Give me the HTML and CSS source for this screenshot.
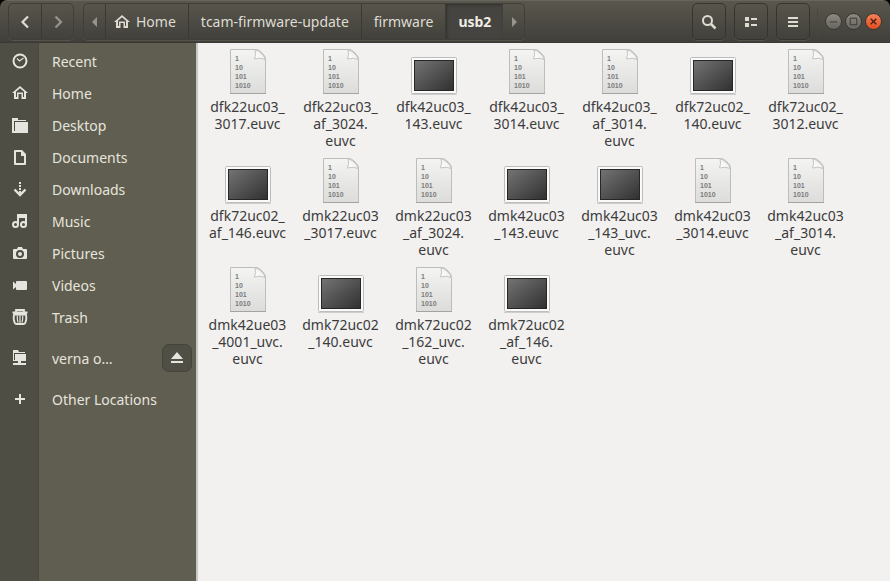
FILE: index.html
```html
<!DOCTYPE html>
<html lang="en">
<head>
<meta charset="utf-8">
<title>usb2</title>
<link rel="stylesheet" href="styles.css">
</head>
<body>
<svg class="defs" aria-hidden="true">
  <defs>
    <linearGradient id="paper" x1="0" y1="0" x2="0" y2="1"><stop offset="0" stop-color="#f4f4f3"/><stop offset="1" stop-color="#dcdcdb"/></linearGradient>
    <linearGradient id="fold" x1="0" y1="1" x2="1" y2="0"><stop offset="0" stop-color="#ffffff"/><stop offset=".5" stop-color="#f6f6f6"/><stop offset="1" stop-color="#c4c4c3"/></linearGradient>
    <linearGradient id="screen" x1="0" y1="0" x2="1" y2="1"><stop offset="0" stop-color="#747474"/><stop offset="1" stop-color="#303030"/></linearGradient>
    <symbol id="home" viewBox="0 0 16 16"><path d="M8 1 0 8h2v6h4.500v-5h3v5H14V8h2zM8 3.300 12 6.800V12h-1V7.500H5V12H4V6.800z" fill="currentColor" fill-rule="evenodd"/></symbol>
    <symbol id="recent" viewBox="0 0 16 16"><circle cx="8" cy="8" r="6.500" fill="none" stroke="currentColor" stroke-width="2"/><path d="m5 5.500 2.500 2.500 4-3" fill="none" stroke="currentColor" stroke-width="1.200"/></symbol>
    <symbol id="desktop" viewBox="0 0 16 16"><path d="M0 1h6v2h8v1H2v10h1V5h13v11H0z" fill="currentColor"/></symbol>
    <symbol id="document" viewBox="0 0 16 16"><path d="M2 2q0-1 1-1h7l4 4v10q0 1-1 1H3q-1 0-1-1zm2 1v11h8V7H9V3z" fill="currentColor" fill-rule="evenodd"/></symbol>
    <symbol id="download" viewBox="0 0 16 16"><path d="M7 1h2v2H7zm0 3h2v2H7zm0 3h2v2H7zm0 3h2v2H7z" fill="currentColor"/><path d="m2.500 8.500 5.500 5.500 5.500-5.500" fill="none" stroke="currentColor" stroke-width="2.400"/></symbol>
    <symbol id="music" viewBox="0 0 16 16"><path d="M6 12V2h8v9M6 4h8" fill="none" stroke="currentColor" stroke-width="2"/><circle cx="3.500" cy="11.500" r="2.500" fill="none" stroke="currentColor" stroke-width="2"/><circle cx="11.500" cy="11.500" r="2.500" fill="none" stroke="currentColor" stroke-width="2"/></symbol>
    <symbol id="camera" viewBox="0 0 16 16"><path d="M2 4h3l1-2h4l1 2h3q1 0 1 1v8q0 1-1 1H2q-1 0-1-1V5q0-1 1-1zm6 1a4 4 0 1 0 0 8 4 4 0 0 0 0-8zm0 2a2 2 0 1 1 0 4 2 2 0 0 1 0-4z" fill="currentColor" fill-rule="evenodd"/></symbol>
    <symbol id="video" viewBox="0 0 16 16"><path d="M1 4.500 4 7V5q0-1 1-1h9q1 0 1 1v7q0 1-1 1H5q-1 0-1-1v-2l-3 2.500z" fill="currentColor"/></symbol>
    <symbol id="trash" viewBox="0 0 16 16"><path d="M4 2.500V1h8v1.500M.5 3.500h15M2 5.500q-1 5 .8 8.500.5 1 1.700 1h7q1.200 0 1.700-1 1.800-3.500.8-8.500z" fill="none" stroke="currentColor" stroke-width="1.800"/><path d="M5.300 6.500q-.3 4 .7 7M8 6v8M10.700 6.500q.3 4-.7 7" fill="none" stroke="currentColor" stroke-width="1.200"/></symbol>
    <symbol id="remote" viewBox="0 0 16 16"><path d="M1 0h5l1 2h6v1H2v7h1V4h11v7H9v2h5v2H1v-2h5v-2H1z" fill="currentColor"/></symbol>
    <symbol id="plus" viewBox="0 0 16 16"><path d="M8 3v10M3 8h10" stroke="currentColor" stroke-width="2"/></symbol>
    <symbol id="eject" viewBox="0 0 16 16"><path d="m8 2 6 7H2zM2 11h12v2H2z" fill="currentColor"/></symbol>
    <symbol id="search" viewBox="0 0 16 16"><circle cx="6.500" cy="6.500" r="4.500" fill="none" stroke="currentColor" stroke-width="2"/><path d="m10 10 4.500 4.500" stroke="currentColor" stroke-width="2.500"/></symbol>
    <symbol id="list" viewBox="0 0 16 16"><path d="M2 3h4v4H2zm0 6h4v4H2zm6-5h6v2H8zm0 6h6v2H8z" fill="currentColor"/></symbol>
    <symbol id="menu" viewBox="0 0 16 16"><path d="M3 3h10v2H3zm0 4h10v2H3zm0 4h10v2H3z" fill="currentColor"/></symbol>
    <symbol id="back" viewBox="0 0 16 16"><path d="m11 2.500-5.500 5.500 5.500 5.500" fill="none" stroke="currentColor" stroke-width="2.200"/></symbol>
    <symbol id="forward" viewBox="0 0 16 16"><path d="m5.500 2.500 5.500 5.500-5.500 5.500" fill="none" stroke="currentColor" stroke-width="2.200"/></symbol>
    <symbol id="tri-left" viewBox="0 0 16 16"><path d="M10 3v10L5 8z" fill="currentColor"/></symbol>
    <symbol id="tri-right" viewBox="0 0 16 16"><path d="M6 3v10l5-5z" fill="currentColor"/></symbol>
    <symbol id="binary" viewBox="0 0 48 48">
      <path d="M6.500 1.500h25q3 0 5 2l3 3q2 2 2 5v34h-35z" fill="url(#paper)" stroke="#bdbdbc"/>
      <path d="M6 45.500h36" stroke="#a3a3a2"/>
      <path d="M31 2q1.500 4-.5 9 6-2 10.500.5-.5-3-2-4.500l-3-3Q34 2.500 31 2z" fill="url(#fold)" stroke="#b9b9b8" stroke-width=".8"/>
      <g class="digits"><text x="11" y="13">1</text><text x="11" y="22">10</text><text x="11" y="31">101</text><text x="11" y="40">1010</text></g>
    </symbol>
    <symbol id="image" viewBox="0 0 48 48">
      <rect x="1.500" y="9.500" width="45" height="36" rx="1" fill="#fafafa" stroke="#bcbcba"/>
      <path d="M1 46.500h46" stroke="#9c9c9a" opacity=".4"/>
      <rect x="4.500" y="12.500" width="39" height="30" fill="url(#screen)" stroke="#262626"/>
    </symbol>
  </defs>
</svg>

<div class="window">
  <header class="headerbar">
    <div class="group nav">
      <button type="button" aria-label="Back"><svg class="icon"><use href="#back"/></svg></button>
      <button type="button" class="dim" aria-label="Forward"><svg class="icon"><use href="#forward"/></svg></button>
    </div>
    <nav class="group path" aria-label="Path">
      <button type="button" class="step dim" aria-label="Scroll left"><svg class="icon"><use href="#tri-left"/></svg></button>
      <button type="button" class="with-icon"><svg class="icon"><use href="#home"/></svg>Home</button>
      <button type="button">tcam-firmware-update</button>
      <button type="button">firmware</button>
      <button type="button" class="current">usb2</button>
      <button type="button" class="step dim" aria-label="Scroll right"><svg class="icon"><use href="#tri-right"/></svg></button>
    </nav>
    <div class="tools">
      <button type="button" class="tool" aria-label="Search"><svg class="icon"><use href="#search"/></svg></button>
      <button type="button" class="tool" aria-label="View as list"><svg class="icon"><use href="#list"/></svg></button>
      <button type="button" class="tool" aria-label="Menu"><svg class="icon"><use href="#menu"/></svg></button>
    </div>
    <div class="controls">
      <button type="button" class="round" aria-label="Minimize"><svg viewBox="0 0 16 16"><path d="M4 8.500h8"/></svg></button>
      <button type="button" class="round" aria-label="Maximize"><svg viewBox="0 0 16 16"><path d="M4.500 4.500h7v7h-7z"/></svg></button>
      <button type="button" class="round close" aria-label="Close"><svg viewBox="0 0 16 16"><path d="m5 5 6 6M11 5l-6 6"/></svg></button>
    </div>
  </header>

  <div class="body">
    <aside class="sidebar">
      <ul class="places">
        <li><a href="#"><svg class="icon"><use href="#recent"/></svg><span>Recent</span></a></li>
        <li><a href="#"><svg class="icon"><use href="#home"/></svg><span>Home</span></a></li>
        <li><a href="#"><svg class="icon"><use href="#desktop"/></svg><span>Desktop</span></a></li>
        <li><a href="#"><svg class="icon"><use href="#document"/></svg><span>Documents</span></a></li>
        <li><a href="#"><svg class="icon"><use href="#download"/></svg><span>Downloads</span></a></li>
        <li><a href="#"><svg class="icon"><use href="#music"/></svg><span>Music</span></a></li>
        <li><a href="#"><svg class="icon"><use href="#camera"/></svg><span>Pictures</span></a></li>
        <li><a href="#"><svg class="icon"><use href="#video"/></svg><span>Videos</span></a></li>
        <li><a href="#"><svg class="icon"><use href="#trash"/></svg><span>Trash</span></a></li>
        <li class="section"><a href="#"><svg class="icon"><use href="#remote"/></svg><span>verna o…</span></a><button type="button" class="eject" aria-label="Eject"><svg class="icon"><use href="#eject"/></svg></button></li>
        <li class="section"><a href="#"><svg class="icon"><use href="#plus"/></svg><span>Other Locations</span></a></li>
      </ul>
    </aside>

    <main class="files">
      <figure><svg><use href="#binary"/></svg><figcaption>dfk22uc03_<br>3017.euvc</figcaption></figure>
      <figure><svg><use href="#binary"/></svg><figcaption>dfk22uc03_<br>af_3024.<br>euvc</figcaption></figure>
      <figure><svg><use href="#image"/></svg><figcaption>dfk42uc03_<br>143.euvc</figcaption></figure>
      <figure><svg><use href="#binary"/></svg><figcaption>dfk42uc03_<br>3014.euvc</figcaption></figure>
      <figure><svg><use href="#binary"/></svg><figcaption>dfk42uc03_<br>af_3014.<br>euvc</figcaption></figure>
      <figure><svg><use href="#image"/></svg><figcaption>dfk72uc02_<br>140.euvc</figcaption></figure>
      <figure><svg><use href="#binary"/></svg><figcaption>dfk72uc02_<br>3012.euvc</figcaption></figure>
      <figure><svg><use href="#image"/></svg><figcaption>dfk72uc02_<br>af_146.euvc</figcaption></figure>
      <figure><svg><use href="#binary"/></svg><figcaption>dmk22uc03<br>_3017.euvc</figcaption></figure>
      <figure><svg><use href="#binary"/></svg><figcaption>dmk22uc03<br>_af_3024.<br>euvc</figcaption></figure>
      <figure><svg><use href="#image"/></svg><figcaption>dmk42uc03<br>_143.euvc</figcaption></figure>
      <figure><svg><use href="#image"/></svg><figcaption>dmk42uc03<br>_143_uvc.<br>euvc</figcaption></figure>
      <figure><svg><use href="#binary"/></svg><figcaption>dmk42uc03<br>_3014.euvc</figcaption></figure>
      <figure><svg><use href="#binary"/></svg><figcaption>dmk42uc03<br>_af_3014.<br>euvc</figcaption></figure>
      <figure><svg><use href="#binary"/></svg><figcaption>dmk42ue03<br>_4001_uvc.<br>euvc</figcaption></figure>
      <figure><svg><use href="#image"/></svg><figcaption>dmk72uc02<br>_140.euvc</figcaption></figure>
      <figure><svg><use href="#binary"/></svg><figcaption>dmk72uc02<br>_162_uvc.<br>euvc</figcaption></figure>
      <figure><svg><use href="#image"/></svg><figcaption>dmk72uc02<br>_af_146.<br>euvc</figcaption></figure>
    </main>
  </div>
</div>
</body>
</html>
```
FILE: styles.css
```css
* { box-sizing: border-box; }

body {
  margin: 0;
  background: #000;
  font-family: "Noto Sans", "Open Sans", sans-serif;
  font-size: 14px;
  color: #3c3c3c;
}

button {
  margin: 0;
  padding: 0;
  border: 0;
  background: none;
  font: inherit;
  color: inherit;
}

.defs { position: absolute; width: 0; height: 0; }
.icon { display: block; flex: none; width: 16px; height: 16px; }

.digits {
  font-family: "Liberation Sans", sans-serif;
  font-size: 7px;
  font-weight: 700;
  fill: #7c7c7c;
}

.window {
  display: flex;
  flex-direction: column;
  min-height: 100vh;
  overflow: hidden;
  border-radius: 7px 7px 0 0;
}

.headerbar {
  display: flex;
  align-items: center;
  gap: 9px;
  height: 43px;
  padding: 0 8px;
  border-top: 1px solid #68665a;
  border-bottom: 1px solid #3a3935;
  background: linear-gradient(#59574d, #403f3a);
  color: #dfdbd2;
}

.group {
  display: flex;
  height: 37px;
  border: 1px solid #3f3e38;
  border-radius: 5px;
  box-shadow: 0 1px #55534a;
  overflow: hidden;
}

.group button {
  display: flex;
  align-items: center;
  justify-content: center;
  padding: 0 12px;
}

.group button + button { border-left: 1px solid #3a3934; }
.nav button { width: 32px; padding: 0; }
.group .step { width: 21px; padding: 0; }
.group .with-icon { gap: 6px; padding: 0 12px 0 8px; }
.group .dim { color: #96948b; }

.group .current {
  background: #454440;
  box-shadow: inset 1px 1px 3px #33322e;
  color: #f0ede5;
  font-weight: 700;
}

.group .current + .step { border-left: 0; }

.tools { display: flex; gap: 8px; margin-left: auto; }

.tool {
  display: grid;
  place-items: center;
  width: 34px;
  height: 37px;
  border: 1px solid #35342f;
  border-radius: 5px;
  box-shadow: 0 1px #55534a;
}

.controls {
  display: flex;
  align-items: center;
  gap: 3px;
  margin-left: -2px;
  padding-left: 7px;
  height: 28px;
  border-left: 1px solid #4a4942;
}

.round {
  width: 17px;
  height: 17px;
  border: 1px solid #363530;
  border-radius: 50%;
  background: linear-gradient(#8b8981, #68665f);
}

.round svg { display: block; width: 15px; height: 15px; fill: none; stroke: #3a3934; }
.close { background: linear-gradient(#f58058, #e2501f); }
.close svg { stroke-width: 1.5; stroke: #4b2010; }

.body { display: flex; flex: 1; }

.sidebar {
  flex: none;
  width: 198px;
  padding-top: 2px;
  border-right: 2px solid #c9c7c3;
  background: linear-gradient(90deg, #4f4e45 38px, #49483f 38px, #49483f 39px, #605e50 39px);
  color: #e6e4de;
}

.places { margin: 0; padding: 0; list-style: none; }
.places li { display: flex; align-items: center; height: 32px; }
.places .section { margin-top: 9px; }

.places a {
  display: flex;
  flex: 1;
  align-items: center;
  gap: 24px;
  padding-left: 12px;
  color: inherit;
  text-decoration: none;
}

.eject {
  display: grid;
  place-items: center;
  width: 30px;
  height: 28px;
  margin-right: 4px;
  border: 1px solid #454439;
  border-radius: 7px;
  background: #504f45;
}

.files {
  display: grid;
  flex: 1;
  grid-template-columns: repeat(auto-fill, 93px);
  grid-auto-rows: 109px;
  align-content: start;
  padding: 5px 0 0 3px;
  background: #f2f1f0;
}

.files figure { margin: 0; text-align: center; }
.files svg { display: block; width: 48px; height: 48px; margin: 0 auto 2px; }
.files figcaption { line-height: 17px; }
```
